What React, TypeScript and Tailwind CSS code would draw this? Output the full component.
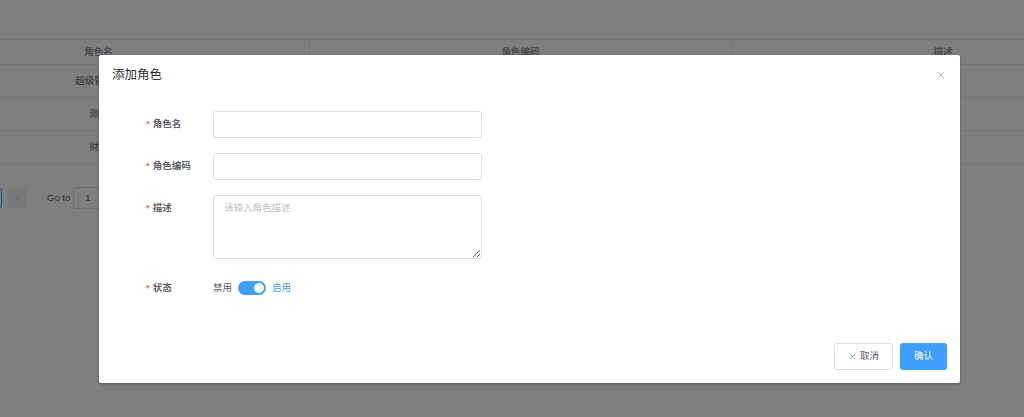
import { X } from "lucide-react";

const font = { fontFamily: '"Liberation Sans","Noto Sans CJK SC",sans-serif' };

function FormRow({ label, children, tall }: { label: string; children: React.ReactNode; tall?: boolean }) {
  return (
    <div className="flex items-start">
      <div className={`w-[67px] flex items-center ${tall ? "h-[14px]" : "h-[27px]"} text-[9.5px] font-bold text-[#606266]`}>
        <span className="text-[#f56c6c] mr-[3px]">*</span>
        {label}
      </div>
      {children}
    </div>
  );
}

export default function App() {
  const rows = ["超级管理员", "测试", "财务"];
  return (
    <div className="relative w-full h-[417px] bg-white overflow-hidden" style={font}>
      {/* page behind the dialog */}
      <div className="pt-[39px]">
        <div className="ml-[-112px] w-[1266px]">
          <div className="grid grid-cols-3 h-[26px] border-y border-[#ebeef5] text-[9.5px] font-bold text-[#909399]">
            <div className="flex items-center justify-center border-r border-[#ebeef5]">角色名</div>
            <div className="flex items-center justify-center border-r border-[#ebeef5]">角色编码</div>
            <div className="flex items-center justify-center">描述</div>
          </div>
          {rows.map((r) => (
            <div key={r} className="grid grid-cols-3 h-[33px] border-b border-[#ebeef5] text-[9.5px] text-[#606266]">
              <div className="flex items-center justify-center">{r}</div>
              <div />
              <div />
            </div>
          ))}
        </div>
        <div className="flex items-center mt-[23px] ml-[-20px] text-[9.5px] text-[#606266]">
          <div className="w-[22px] h-[20px] rounded-[2px] border border-[#409eff]" />
          <div className="ml-[6px] w-[19px] h-[20px] rounded-[2px] bg-[#f4f4f5] flex items-center justify-center text-[#909399]">
            ›
          </div>
          <span className="ml-[20px]">Go to</span>
          <div className="ml-[3px] w-[46px] h-[22px] rounded-[3px] border border-[#dcdfe6] flex items-center pl-[11px]">
            1
          </div>
        </div>
      </div>

      {/* overlay */}
      <div className="absolute inset-0 bg-black/50" />

      {/* dialog */}
      <div className="absolute left-[99px] top-[55px] w-[861px] h-[328px] bg-white rounded-[2px] shadow-[0_1px_3px_rgba(0,0,0,0.3)] flex flex-col">
        <div className="h-[40px] flex items-center justify-between pl-[13px] pr-[14px]">
          <span className="text-[12.5px] text-[#303133]">添加角色</span>
          <X size={10} strokeWidth={1.8} className="text-[#909399]" />
        </div>
        <div className="mt-[16px] pl-[47px] flex flex-col gap-[15px]">
          <FormRow label="角色名">
            <div className="w-[269px] h-[27px] rounded-[3px] border border-[#dcdfe6]" />
          </FormRow>
          <FormRow label="角色编码">
            <div className="w-[269px] h-[27px] rounded-[3px] border border-[#dcdfe6]" />
          </FormRow>
          <FormRow label="描述">
            <textarea
              placeholder="请输入角色描述"
              className="w-[269px] h-[64px] rounded-[3px] border border-[#dcdfe6] px-[10px] py-[5px] text-[9.5px] text-[#606266] placeholder:text-[#c0c4cc] outline-none"
              style={font}
            />
          </FormRow>
          <div className="mt-[7px]">
            <FormRow label="状态" tall>
              <div className="flex items-center h-[14px] text-[9.5px]">
                <span className="text-[#606266]">禁用</span>
                <div className="ml-[6px] w-[28px] h-[14px] rounded-full bg-[#409eff] flex items-center justify-end pr-[2px]">
                  <div className="w-[10px] h-[10px] rounded-full bg-white" />
                </div>
                <span className="ml-[6px] text-[#409eff]">启用</span>
              </div>
            </FormRow>
          </div>
        </div>
        <div className="mt-auto flex justify-end gap-[7px] pr-[13px] pb-[13px]">
          <div className="w-[59px] h-[27px] rounded-[3px] border border-[#dcdfe6] flex items-center justify-center gap-[3px] text-[9.5px] text-[#606266]">
            <X size={9} strokeWidth={1.5} />
            取消
          </div>
          <div className="w-[47px] h-[27px] rounded-[3px] bg-[#409eff] flex items-center justify-center text-[9.5px] text-white">
            确认
          </div>
        </div>
      </div>
    </div>
  );
}
